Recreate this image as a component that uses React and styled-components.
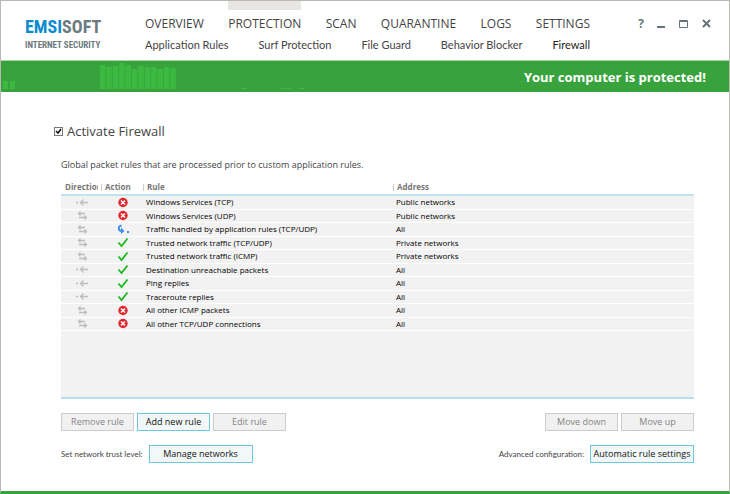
import React, { useState } from 'react';
import styled, { createGlobalStyle } from 'styled-components';

const GlobalStyle = createGlobalStyle`
    * {
        box-sizing: border-box;
    }
    body {
        margin: 0;
        background: #fff;
        color: #444;
        font-family: "Open Sans", "Noto Sans", sans-serif;
        font-size: 9px;
    }
    button, input {
        font-family: inherit;
    }
`;

const Window = styled.div`
    display: flex;
    flex-direction: column;
    min-height: 100vh;
    border: 1px solid #b9b9b4;
    border-bottom: 3px solid #38a33c;
`;

const Header = styled.header`
    display: flex;
    align-items: flex-start;
    height: 60px;
    padding: 0 16px 0 24px;
    border-bottom: 1px solid #a5d4a7;
`;

const Logo = styled.div`
    flex: none;
    width: 120px;
    padding-top: 16px;
    color: #6b7b80;
    font-family: "Roboto Condensed", "Open Sans Condensed", "Noto Sans Condensed", Roboto, sans-serif;
    font-weight: bold;
`;

const LogoName = styled.div`
    font-size: 18px;
    line-height: 20px;
    span {
        color: #0d8bd0;
    }
`;

const LogoProduct = styled.div`
    font-size: 9px;
    line-height: 16px;
`;

const Menus = styled.div`
    flex: none;
    width: 445px;
`;

const Nav = styled.nav`
    display: flex;
    justify-content: space-between;
`;

const MainLink = styled.a`
    border-top: 9px solid ${props => props.$active ? '#e8e6e4' : 'transparent'};
    padding-top: 5px;
    color: #444;
    font-size: 12px;
    line-height: 18px;
    text-decoration: none;
`;

const SubLink = styled.a`
    padding-top: 3px;
    color: ${props => props.$active ? '#222' : '#444'};
    font-family: Lato, "Open Sans", sans-serif;
    font-size: 11px;
    line-height: 18px;
    text-decoration: none;
`;

const WindowButtons = styled.div`
    display: flex;
    flex: 1;
    justify-content: flex-end;
    gap: 10px;
    padding-top: 17px;
`;

const WindowButton = styled.button`
    width: 12px;
    height: 12px;
    padding: 0;
    border: none;
    background: none;
    color: #66757a;
    font-size: 12px;
    font-weight: bold;
    line-height: 12px;
    svg {
        display: block;
    }
`;

const Banner = styled.div`
    display: flex;
    align-items: center;
    justify-content: space-between;
    height: 31px;
    padding-right: 23px;
    background: #38a33c;
    color: #fff;
    font-size: 13px;
    font-weight: bold;
`;

const Content = styled.main`
    display: flex;
    flex: 1;
    flex-direction: column;
    padding: 31px 35px 28px 60px;
`;

const Activate = styled.label`
    display: flex;
    align-items: center;
    gap: 4px;
    margin-left: -7px;
    font-size: 13px;
    line-height: 16px;
`;

const CheckBox = styled.input`
    appearance: none;
    width: 9px;
    height: 9px;
    margin: 0;
    border: 1px solid #777;
    background: #fff;
    &:checked {
        background: url("data:image/svg+xml,%3Csvg xmlns='http://www.w3.org/2000/svg' viewBox='0 0 7 7'%3E%3Cpath d='M1 3l2 2 3-4' fill='none' stroke='%23111' stroke-width='1.5'/%3E%3C/svg%3E");
    }
`;

const Intro = styled.p`
    margin: 18px 0 8px;
    line-height: 16px;
`;

const RuleList = styled.div`
    flex: 1;
    border-bottom: 2px solid #b5dfea;
    background: #f2f2f2;
`;

const RuleTable = styled.table`
    width: 100%;
    border-collapse: collapse;
    table-layout: fixed;
    color: #000;
    font-size: 8px;
    line-height: 12px;
`;

const HeadCell = styled.th`
    width: ${props => props.$width || 'auto'};
    padding: 0 3px 1px 0;
    border-bottom: 2px solid #c3e3ec;
    background: #fff;
    color: #777;
    text-align: left;
    white-space: nowrap;
    div {
        overflow: hidden;
        padding-left: 4px;
        background: linear-gradient(#ccc, #ccc) left center / 1px 7px no-repeat;
    }
    &:first-child div {
        background: none;
    }
`;

const Row = styled.tr`
    height: 14px;
    border-bottom: 1px solid #fff;
    &:nth-child(even) {
        height: 13px;
    }
`;

const Cell = styled.td`
    padding: 0 0 0 ${props => props.$indent || '3px'};
    white-space: nowrap;
    svg {
        display: block;
    }
`;

const ButtonRow = styled.div`
    display: flex;
    align-items: center;
    gap: 3px;
    margin-top: 14px;
`;

const Caption = styled.span`
    font-family: Lato, "Open Sans", sans-serif;
    font-size: 8px;
`;

const Spacer = styled.div`
    flex: 1;
`;

const Button = styled.button`
    width: ${props => props.$wide ? '104px' : '73px'};
    height: 18px;
    margin-left: ${props => props.$wide ? '3px' : '0'};
    padding: 0;
    border: 1px solid #6cc7e0;
    background: #f2f7f8;
    color: #111;
    font-size: 9px;
    line-height: 14px;
    white-space: nowrap;
    &:disabled {
        border-color: #ccc;
        background: #f1f1f1;
        color: #858585;
    }
`;

const mainMenu = ['Overview', 'Protection', 'Scan', 'Quarantine', 'Logs', 'Settings'];
const subMenu = ['Application Rules', 'Surf Protection', 'File Guard', 'Behavior Blocker', 'Firewall'];

const rules = [
    { direction: 'in', action: 'block', rule: 'Windows Services (TCP)', address: 'Public networks' },
    { direction: 'both', action: 'block', rule: 'Windows Services (UDP)', address: 'Public networks' },
    { direction: 'both', action: 'forward', rule: 'Traffic handled by application rules (TCP/UDP)', address: 'All' },
    { direction: 'both', action: 'allow', rule: 'Trusted network traffic (TCP/UDP)', address: 'Private networks' },
    { direction: 'both', action: 'allow', rule: 'Trusted network traffic (ICMP)', address: 'Private networks' },
    { direction: 'in', action: 'allow', rule: 'Destination unreachable packets', address: 'All' },
    { direction: 'in', action: 'allow', rule: 'Ping replies', address: 'All' },
    { direction: 'in', action: 'allow', rule: 'Traceroute replies', address: 'All' },
    { direction: 'both', action: 'block', rule: 'All other ICMP packets', address: 'All' },
    { direction: 'both', action: 'block', rule: 'All other TCP/UDP connections', address: 'All' },
];

// bar heights of the activity graph, left to right
const activity = [24, 22, 23, 26, 24, 20, 23, 22, 22, 20, 22, 21];

function ActivityGraph() {
    return (
        <svg width="310" height="31" fill="#3cb940" aria-hidden="true">
            <rect x="2" y="20" width="5" height="8" />
            <rect x="9" y="20" width="5" height="8" />
            {activity.map((h, i) => (
                <rect key={i} x={99 + i * 6.4} y={28 - h} width="5.4" height={h} />
            ))}
            {[240, 279, 285, 298].map(x => <rect key={x} x={x} y="27" width="5" height="1" />)}
        </svg>
    );
}

function DirectionIcon({ type }) {
    return (
        <svg width="12" height="11" viewBox="0 0 12 11" fill="none" stroke="#bdbdbd" strokeWidth="1.3" role="img" aria-label={type}>
            {type === 'in'
                ? <path d="M0 5.5h2M4 5.5h8M7.5 2.5l-3 3 3 3" />
                : <path d="M9 3.5H3M4.5 1.5l-2 2 2 2M3 7.5h7M8.5 5.5l2 2-2 2" />}
        </svg>
    );
}

function ActionIcon({ type }) {
    return (
        <svg width="12" height="11" viewBox="0 0 12 11" fill="none" role="img" aria-label={type}>
            {type === 'block' && (
                <>
                    <circle cx="6" cy="5.5" r="4.7" fill="#e3262b" />
                    <path d="M4 3.5l4 4M8 3.5l-4 4" stroke="#fff" strokeWidth="1.5" />
                </>
            )}
            {type === 'allow' && <path d="M1.5 5.5l3 3.5 6-7.5" stroke="#1cb81f" strokeWidth="1.8" />}
            {type === 'forward' && (
                <>
                    <path d="M4.5 1.5C1 2 1 6.5 4 7h1" stroke="#3b8eea" strokeWidth="1.8" />
                    <path d="M4 3.5L7.5 7 4 10zM10 7h2v2h-2z" fill="#3b8eea" />
                </>
            )}
        </svg>
    );
}

function TitleBar() {
    return (
        <Header>
            <Logo>
                <LogoName><span>EMSI</span>SOFT</LogoName>
                <LogoProduct>INTERNET SECURITY</LogoProduct>
            </Logo>
            <Menus>
                <Nav>
                    {mainMenu.map(name => (
                        <MainLink key={name} href="#" $active={name === 'Protection'}>{name.toUpperCase()}</MainLink>
                    ))}
                </Nav>
                <Nav>
                    {subMenu.map(name => (
                        <SubLink key={name} href="#" $active={name === 'Firewall'}>{name}</SubLink>
                    ))}
                </Nav>
            </Menus>
            <WindowButtons>
                <WindowButton>?</WindowButton>
                <WindowButton aria-label="Minimize">
                    <svg width="12" height="12"><path d="M0 9h8" stroke="#66757a" strokeWidth="2" /></svg>
                </WindowButton>
                <WindowButton aria-label="Maximize">
                    <svg width="12" height="12" fill="none" stroke="#66757a"><path d="M.5 2.5h8v7h-8zM0 3.5h9" /></svg>
                </WindowButton>
                <WindowButton aria-label="Close">
                    <svg width="12" height="12"><path d="M2 2l7 7M9 2l-7 7" stroke="#66757a" strokeWidth="2" /></svg>
                </WindowButton>
            </WindowButtons>
        </Header>
    );
}

function Rules() {
    return (
        <RuleList>
            <RuleTable>
                <thead>
                    <tr>
                        <HeadCell $width="40px"><div>Direction</div></HeadCell>
                        <HeadCell $width="42px"><div>Action</div></HeadCell>
                        <HeadCell $width="250px"><div>Rule</div></HeadCell>
                        <HeadCell><div>Address</div></HeadCell>
                    </tr>
                </thead>
                <tbody>
                    {rules.map(item => (
                        <Row key={item.rule}>
                            <Cell $indent="15px"><DirectionIcon type={item.direction} /></Cell>
                            <Cell $indent="16px"><ActionIcon type={item.action} /></Cell>
                            <Cell>{item.rule}</Cell>
                            <Cell>{item.address}</Cell>
                        </Row>
                    ))}
                </tbody>
            </RuleTable>
        </RuleList>
    );
}

function App() {
    const [active, setActive] = useState(true);

    return (
        <Window>
            <GlobalStyle />
            <TitleBar />
            <Banner>
                <ActivityGraph />
                Your computer is protected!
            </Banner>
            <Content>
                <Activate>
                    <CheckBox type="checkbox" checked={active} onChange={e => setActive(e.target.checked)} />
                    Activate Firewall
                </Activate>
                <Intro>Global packet rules that are processed prior to custom application rules.</Intro>
                <Rules />
                <ButtonRow>
                    <Button disabled>Remove rule</Button>
                    <Button>Add new rule</Button>
                    <Button disabled>Edit rule</Button>
                    <Spacer />
                    <Button disabled>Move down</Button>
                    <Button disabled>Move up</Button>
                </ButtonRow>
                <ButtonRow>
                    <Caption id="trust">Set network trust level:</Caption>
                    <Button $wide aria-describedby="trust">Manage networks</Button>
                    <Spacer />
                    <Caption id="advanced">Advanced configuration:</Caption>
                    <Button $wide aria-describedby="advanced">Automatic rule settings</Button>
                </ButtonRow>
            </Content>
        </Window>
    );
}

export default App;
